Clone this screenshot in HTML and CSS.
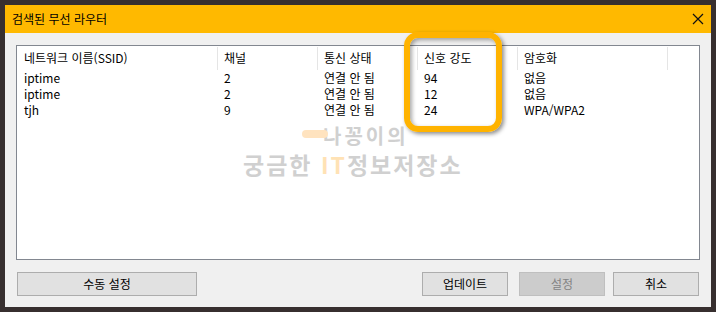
FILE: index.html
```
<!DOCTYPE html>
<html lang="ko">
<head>
    <meta charset="UTF-8">
    <title>검색된 무선 라우터</title>
    <link rel="stylesheet" href="styles.css">
</head>
<body>
    <div class="window">
        <!-- Title bar -->
        <div class="titlebar">
            <span class="title">검색된 무선 라우터</span>
            <svg class="close" width="12" height="12" viewBox="0 0 12 12">
                <path d="M1 1 L11 11 M11 1 L1 11" stroke="#111" stroke-width="1.2" fill="none"/>
            </svg>
        </div>

        <div class="content">
            <!-- Router list -->
            <div class="listview">
                <div class="row head">
                    <div class="cell c1">네트워크 이름(SSID)</div>
                    <div class="cell c2">채널</div>
                    <div class="cell c3">통신 상태</div>
                    <div class="cell c4">신호 강도</div>
                    <div class="cell c5">암호화</div>
                </div>
                <div class="row">
                    <div class="cell c1">iptime</div>
                    <div class="cell c2">2</div>
                    <div class="cell c3">연결 안 됨</div>
                    <div class="cell c4">94</div>
                    <div class="cell c5">없음</div>
                </div>
                <div class="row">
                    <div class="cell c1">iptime</div>
                    <div class="cell c2">2</div>
                    <div class="cell c3">연결 안 됨</div>
                    <div class="cell c4">12</div>
                    <div class="cell c5">없음</div>
                </div>
                <div class="row">
                    <div class="cell c1">tjh</div>
                    <div class="cell c2">9</div>
                    <div class="cell c3">연결 안 됨</div>
                    <div class="cell c4">24</div>
                    <div class="cell c5">WPA/WPA2</div>
                </div>
            </div>

            <!-- Buttons -->
            <div class="buttons">
                <button class="btn wide">수동 설정</button>
                <button class="btn update">업데이트</button>
                <button class="btn apply" disabled>설정</button>
                <button class="btn cancel">취소</button>
            </div>
        </div>

        <!-- Watermark -->
        <div class="watermark">
            <div class="wm-top"><span class="pill"></span>나꽁이의</div>
            <div class="wm-bottom">궁금한 <span class="it">IT</span>정보저장소</div>
        </div>

        <!-- Highlight box -->
        <div class="highlight"></div>
    </div>
</body>
</html>
```

FILE: styles.css
```
body {
    margin: 0;
    background-color: #372f2f;
    font-family: "Noto Sans CJK KR", "Noto Sans", sans-serif;
    font-size: 12px;
    color: #000;
}
.window {
    position: relative;
    margin: 5px;
    width: 706px;
    height: 302px;
    background-color: #f0f0f0;
    display: flex;
    flex-direction: column;
}

/* Title bar */
.titlebar {
    height: 28px;
    background-color: #ffb900;
    display: flex;
    align-items: center;
    justify-content: space-between;
    padding: 0 7px 0 7px;
}
.title {
    font-size: 12px;
    line-height: 14px;
}
.close {
    display: block;
    margin-top: -1px;
}

/* Content */
.content {
    padding: 12px 12px 0 11px;
}
.listview {
    width: 682px;
    height: 213px;
    border: 1px solid #828790;
    background-color: #fff;
}
.row {
    display: flex;
    height: 16px;
    line-height: 16px;
}
.row.head {
    height: 24px;
    line-height: 22px;
}
.cell {
    box-sizing: border-box;
    padding-left: 6px;
    white-space: nowrap;
    overflow: hidden;
}
.head .cell {
    border-right: 1px solid #e5e5e5;
    margin-top: 1px;
    height: 23px;
}
.c1 { width: 201px; padding-left: 7px; }
.c2 { width: 100px; }
.c3 { width: 100px; }
.c4 { width: 100px; }
.c5 { width: 150px; }

/* Buttons */
.buttons {
    display: flex;
    margin-top: 12px;
    padding-left: 1px;
}
.btn {
    height: 24px;
    width: 86px;
    background-color: #e1e1e1;
    border: 1px solid #adadad;
    font-family: "Noto Sans CJK KR", "Noto Sans", sans-serif;
    font-size: 12px;
    color: #000;
    padding: 0;
    line-height: 20px;
}
.btn.wide {
    width: 180px;
}
.btn.update {
    margin-left: auto;
}
.btn.apply {
    margin-left: 11px;
    background-color: #cccccc;
    border-color: #bfbfbf;
    color: #838383;
}
.btn.cancel {
    margin-left: 8px;
}

/* Watermark over the list */
.watermark {
    position: absolute;
    left: 238px;
    top: 118px;
    font-weight: bold;
    color: #d0d0d0;
}
.wm-top {
    position: relative;
    font-size: 20px;
    line-height: 26px;
    padding-left: 80px;
    letter-spacing: 3px;
}
.pill {
    position: absolute;
    left: 59px;
    top: 7px;
    width: 26px;
    height: 8px;
    border-radius: 4px;
    background-color: #ffe3bf;
}
.wm-bottom {
    font-size: 23px;
    line-height: 30px;
    letter-spacing: 2px;
}
.it {
    color: #ffe2b5;
}

/* Orange highlight box */
.highlight {
    position: absolute;
    left: 399px;
    top: 27px;
    width: 86px;
    height: 88px;
    border: 6px solid #ffb300;
    border-radius: 14px;
    box-shadow: 2px 2px 4px rgba(0, 0, 0, 0.45), inset 2px 2px 4px rgba(0, 0, 0, 0.35);
}
```
